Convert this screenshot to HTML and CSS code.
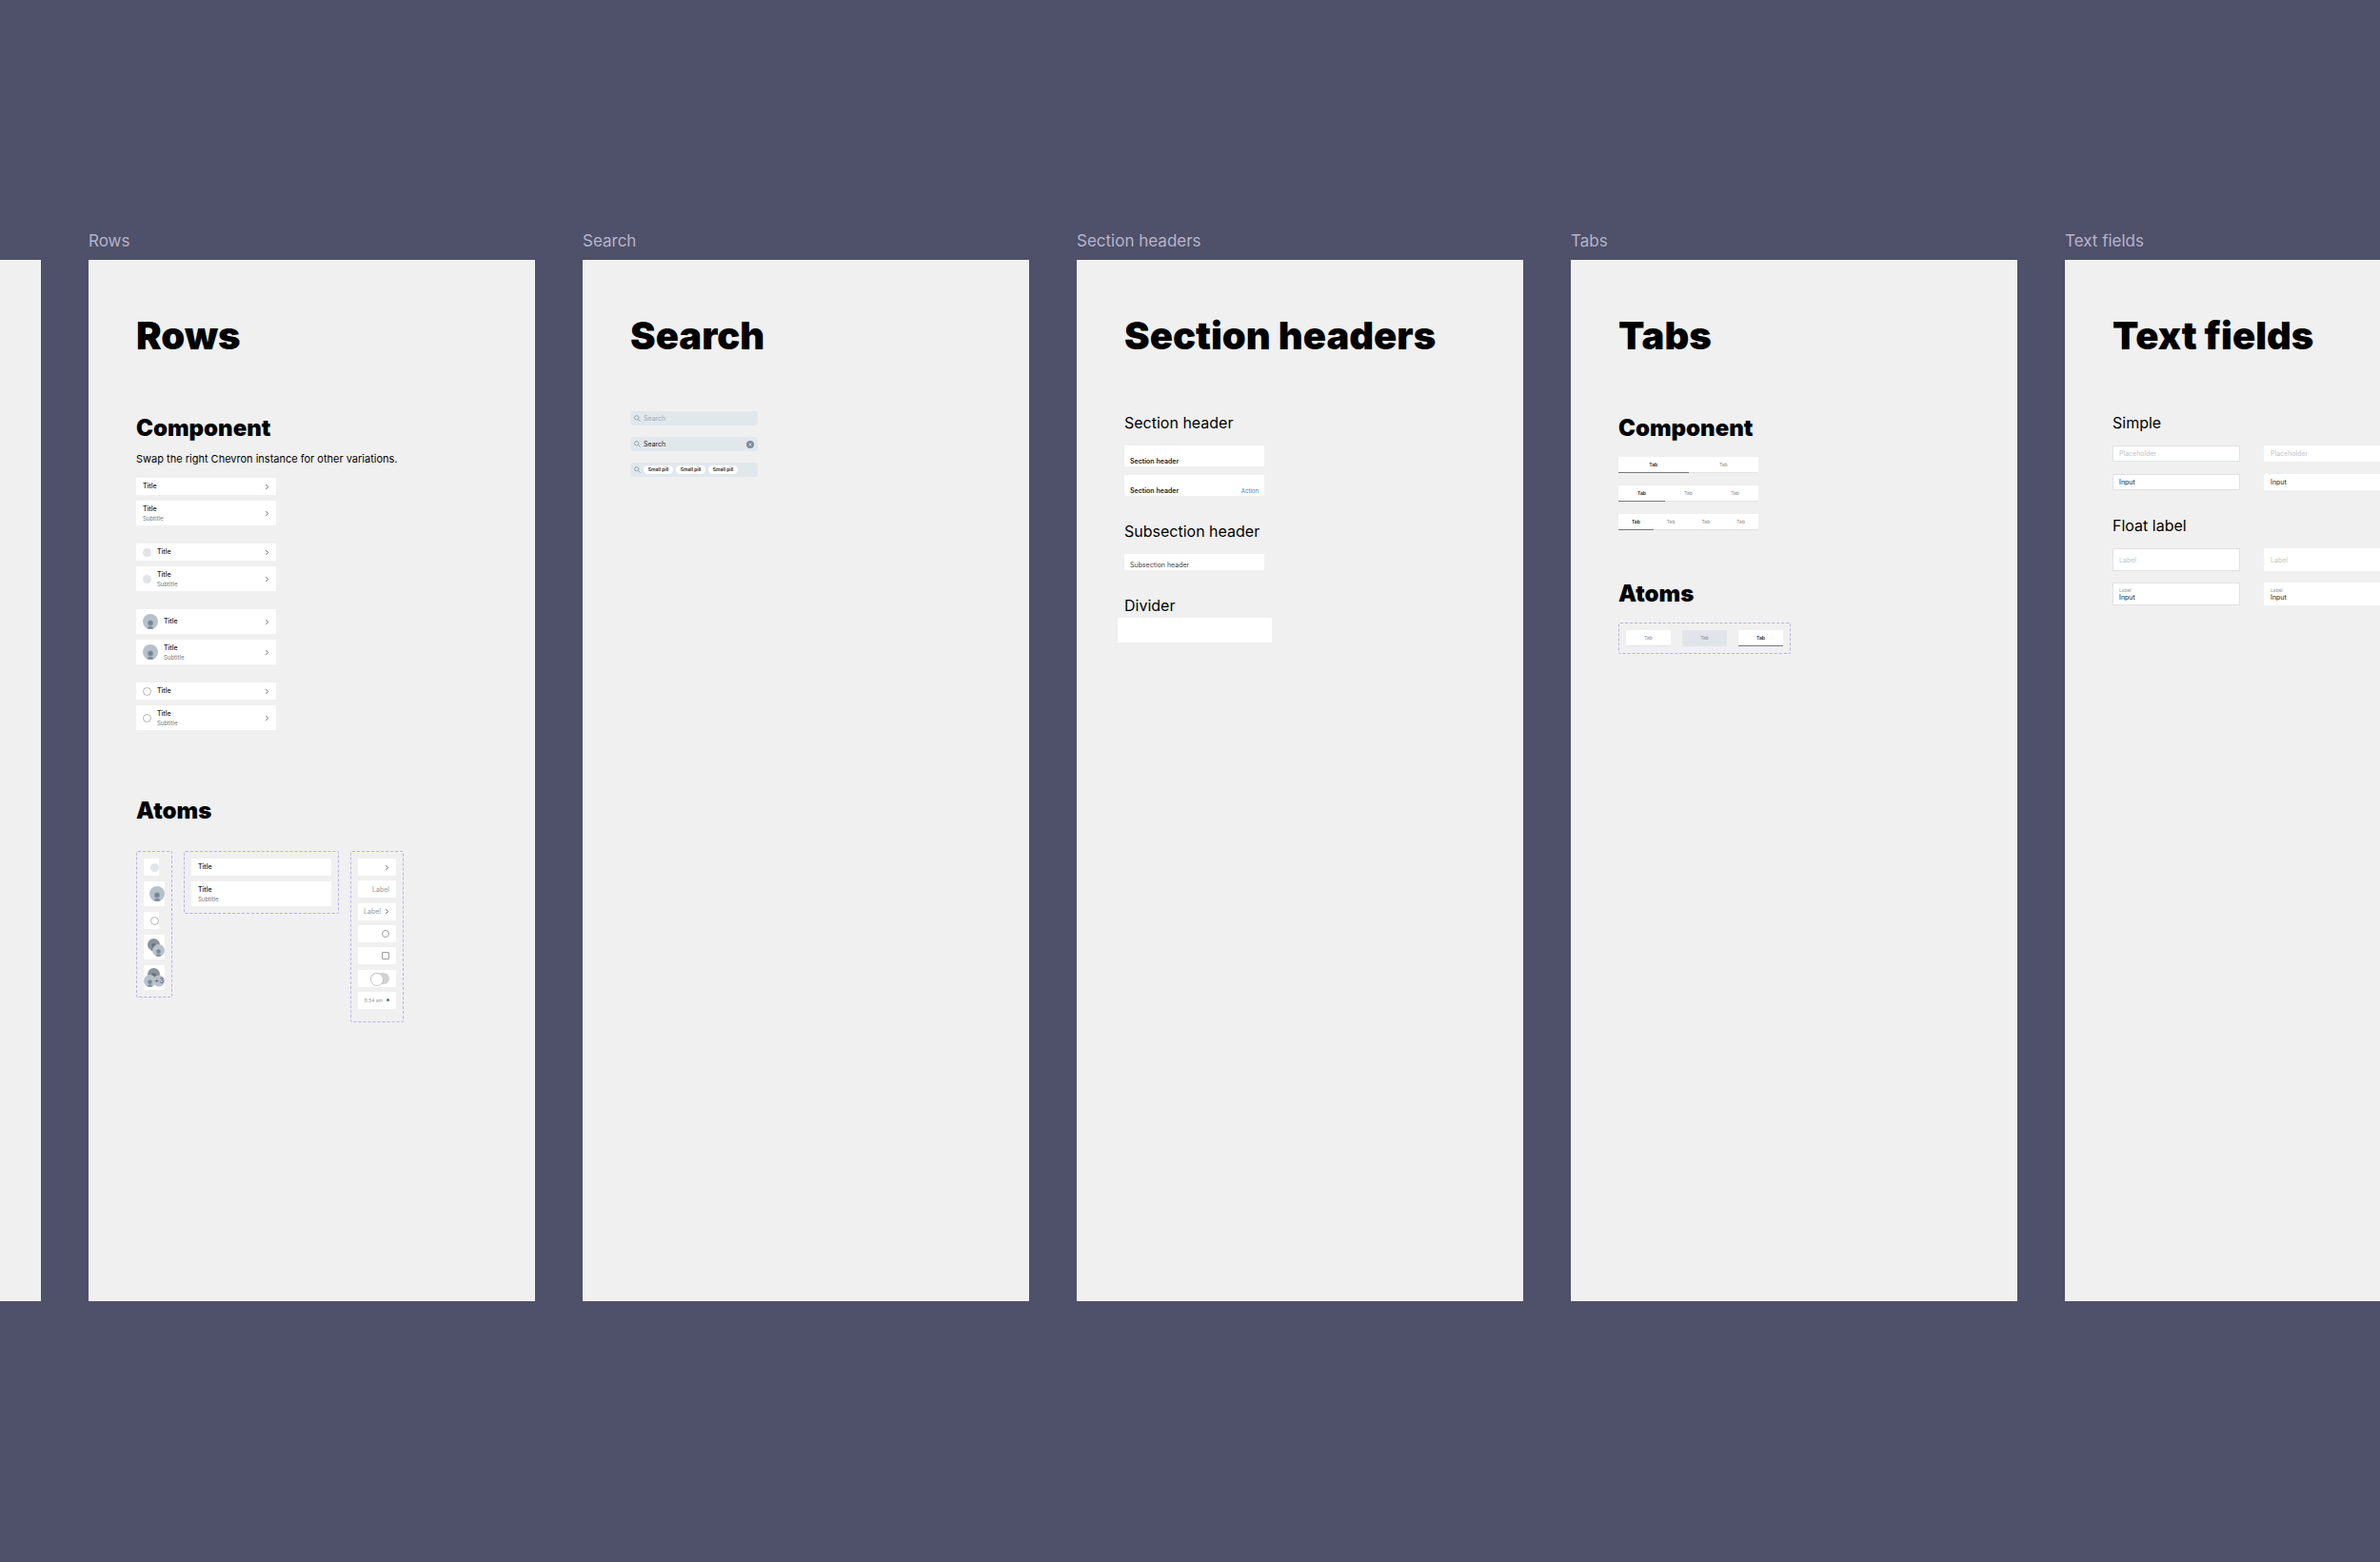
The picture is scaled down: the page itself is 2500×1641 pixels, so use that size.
FILE: index.html
```html
<!DOCTYPE html>
<html lang="en">
<head>
    <meta charset="UTF-8">
    <meta name="viewport" content="width=device-width, initial-scale=1.0">
    <title>Components</title>
    <link rel="stylesheet" href="styles.css">
</head>
<body>
    <!-- shared icons -->
    <svg class="sprite" aria-hidden="true">
        <symbol id="chevron" viewBox="0 0 4 6">
            <path d="M1 1l2 2-2 2" fill="none" stroke="#555b60" stroke-width=".8"/>
        </symbol>
        <symbol id="avatar" viewBox="0 0 16 16">
            <circle cx="8" cy="8" r="8" fill="#b7c1cb"/>
            <circle cx="8" cy="9.5" r="2.9" fill="#82909d"/>
            <circle cx="8" cy="9.3" r="1.3" fill="#6f7d8a"/>
            <path d="M4.6 15.2c.6-2 1.8-2.2 3.4-2.2s2.8.2 3.4 2.2A8 8 0 0 1 4.6 15.2z" fill="#82909d"/>
        </symbol>
        <symbol id="avatar-dark" viewBox="0 0 16 16">
            <circle cx="8" cy="8" r="8" fill="#89949c"/>
            <circle cx="8" cy="9.5" r="2.9" fill="#636e78"/>
            <path d="M4.6 15.2c.6-2 1.8-2.2 3.4-2.2s2.8.2 3.4 2.2A8 8 0 0 1 4.6 15.2z" fill="#636e78"/>
        </symbol>
        <symbol id="magnifier" viewBox="0 0 7 7">
            <circle cx="2.8" cy="2.8" r="2.2" fill="none" stroke="#7d8b96" stroke-width=".7"/>
            <path d="M4.4 4.4l2.2 2.2" stroke="#7d8b96" stroke-width=".7"/>
        </symbol>
    </svg>

    <main class="canvas">
        <section class="board">
            <div class="frame"></div>
        </section>

        <section class="board">
            <p class="board-name">Rows</p>
            <div class="frame">
                <h1>Rows</h1>
                <h2>Component</h2>
                <p class="note">Swap the right Chevron instance for other variations.</p>
                <div class="rows">
                    <div class="row-group">
                        <a class="row" href="#"><span class="text"><span class="title">Title</span></span><svg class="chevron"><use href="#chevron"/></svg></a>
                        <a class="row tall" href="#"><span class="text"><span class="title">Title</span><span class="subtitle">Subtitle</span></span><svg class="chevron"><use href="#chevron"/></svg></a>
                    </div>
                    <div class="row-group">
                        <a class="row" href="#"><span class="dot"></span><span class="text"><span class="title">Title</span></span><svg class="chevron"><use href="#chevron"/></svg></a>
                        <a class="row tall" href="#"><span class="dot"></span><span class="text"><span class="title">Title</span><span class="subtitle">Subtitle</span></span><svg class="chevron"><use href="#chevron"/></svg></a>
                    </div>
                    <div class="row-group">
                        <a class="row tall" href="#"><svg class="avatar"><use href="#avatar"/></svg><span class="text"><span class="title">Title</span></span><svg class="chevron"><use href="#chevron"/></svg></a>
                        <a class="row tall" href="#"><svg class="avatar"><use href="#avatar"/></svg><span class="text"><span class="title">Title</span><span class="subtitle">Subtitle</span></span><svg class="chevron"><use href="#chevron"/></svg></a>
                    </div>
                    <div class="row-group">
                        <label class="row"><input class="radio" type="radio" name="row"><span class="text"><span class="title">Title</span></span><svg class="chevron"><use href="#chevron"/></svg></label>
                        <label class="row tall"><input class="radio" type="radio" name="row"><span class="text"><span class="title">Title</span><span class="subtitle">Subtitle</span></span><svg class="chevron"><use href="#chevron"/></svg></label>
                    </div>
                </div>

                <h2 class="row-atoms-title">Atoms</h2>
                <div class="atoms row-atoms">
                    <div class="variants left">
                        <div class="atom"><span class="dot"></span></div>
                        <div class="atom tall wide"><svg class="avatar"><use href="#avatar"/></svg></div>
                        <div class="atom"><input class="radio" type="radio" aria-label="Select"></div>
                        <div class="atom tall wide">
                            <svg class="avatars" viewBox="0 0 22 26">
                                <use href="#avatar-dark" x="4" y="4" width="13" height="13"/>
                                <use href="#avatar" x="9" y="10" width="13" height="13"/>
                            </svg>
                        </div>
                        <div class="atom tall wide">
                            <svg class="avatars" viewBox="0 0 22 26">
                                <use href="#avatar-dark" x="4" y="3" width="13" height="13"/>
                                <circle cx="16" cy="16.5" r="6" fill="#b7c1cb"/>
                                <use href="#avatar" x="0" y="10" width="13" height="13"/>
                                <text class="more" x="11" y="19">+3</text>
                            </svg>
                        </div>
                    </div>
                    <div class="variants middle">
                        <div class="row"><span class="text"><span class="title">Title</span></span></div>
                        <div class="row tall"><span class="text"><span class="title">Title</span><span class="subtitle">Subtitle</span></span></div>
                    </div>
                    <div class="variants right">
                        <div class="atom"><svg class="chevron"><use href="#chevron"/></svg></div>
                        <div class="atom"><span class="value">Label</span></div>
                        <div class="atom"><span class="value">Label</span><svg class="chevron"><use href="#chevron"/></svg></div>
                        <div class="atom"><input class="radio small" type="radio" aria-label="Radio"></div>
                        <div class="atom"><input class="check" type="checkbox" aria-label="Checkbox"></div>
                        <div class="atom"><input class="toggle" type="checkbox" aria-label="Toggle"></div>
                        <div class="atom"><span class="time">9:54 am</span><span class="status"></span></div>
                    </div>
                </div>
            </div>
        </section>

        <section class="board">
            <p class="board-name">Search</p>
            <div class="frame">
                <h1>Search</h1>
                <div class="searches">
                    <div class="search">
                        <svg class="magnifier"><use href="#magnifier"/></svg>
                        <input type="text" placeholder="Search" aria-label="Search">
                    </div>
                    <div class="search">
                        <svg class="magnifier"><use href="#magnifier"/></svg>
                        <input type="text" value="Search" aria-label="Search">
                        <button class="clear" type="button" aria-label="Clear">
                            <svg viewBox="0 0 8 8"><circle cx="4" cy="4" r="4" fill="#7d8b96"/><path d="M2.5 2.5l3 3M5.5 2.5l-3 3" stroke="#e1e8ec" stroke-width=".8"/></svg>
                        </button>
                    </div>
                    <div class="search">
                        <svg class="magnifier"><use href="#magnifier"/></svg>
                        <button class="pill" type="button">Small pill</button>
                        <button class="pill" type="button">Small pill</button>
                        <button class="pill" type="button">Small pill</button>
                    </div>
                </div>
            </div>
        </section>

        <section class="board">
            <p class="board-name">Section headers</p>
            <div class="frame">
                <h1>Section headers</h1>
                <h3>Section header</h3>
                <div class="headers">
                    <div class="header"><strong>Section header</strong></div>
                    <div class="header"><strong>Section header</strong><a href="#">Action</a></div>
                </div>
                <h3>Subsection header</h3>
                <div class="headers">
                    <div class="header sub">Subsection header</div>
                </div>
                <h3>Divider</h3>
                <div class="divider"></div>
            </div>
        </section>

        <section class="board">
            <p class="board-name">Tabs</p>
            <div class="frame">
                <h1>Tabs</h1>
                <h2>Component</h2>
                <div class="tab-list">
                    <div class="tabs">
                        <button class="tab active" type="button">Tab</button>
                        <button class="tab" type="button">Tab</button>
                    </div>
                    <div class="tabs">
                        <button class="tab active" type="button">Tab</button>
                        <button class="tab" type="button">Tab</button>
                        <button class="tab" type="button">Tab</button>
                    </div>
                    <div class="tabs">
                        <button class="tab active" type="button">Tab</button>
                        <button class="tab" type="button">Tab</button>
                        <button class="tab" type="button">Tab</button>
                        <button class="tab" type="button">Tab</button>
                    </div>
                </div>
                <h2 class="tab-atoms-title">Atoms</h2>
                <div class="atoms">
                    <div class="variants tab-atoms">
                        <button class="tab" type="button">Tab</button>
                        <button class="tab pressed" type="button">Tab</button>
                        <button class="tab active" type="button">Tab</button>
                    </div>
                </div>
            </div>
        </section>

        <section class="board">
            <p class="board-name">Text fields</p>
            <div class="frame">
                <h1>Text fields</h1>
                <h3>Simple</h3>
                <div class="fields simple">
                    <input class="field outlined" type="text" placeholder="Placeholder" aria-label="Placeholder">
                    <input class="field" type="text" placeholder="Placeholder" aria-label="Placeholder">
                    <input class="field outlined" type="text" value="Input" aria-label="Input">
                    <input class="field" type="text" value="Input" aria-label="Input">
                </div>
                <h3>Float label</h3>
                <div class="fields float">
                    <input class="field outlined" type="text" placeholder="Label" aria-label="Label">
                    <input class="field" type="text" placeholder="Label" aria-label="Label">
                    <label class="field outlined">Label<input type="text" value="Input"></label>
                    <label class="field">Label<input type="text" value="Input"></label>
                </div>
            </div>
        </section>
    </main>
</body>
</html>
```
FILE: styles.css
```css
* {
    box-sizing: border-box;
}

body {
    margin: 0;
    background: #4f5069;
    color: #000;
    font-family: Inter, "Liberation Sans", sans-serif;
    overflow-x: hidden;
}

h1, h2, h3, p {
    margin: 0;
}

button, input {
    margin: 0;
    padding: 0;
    border: 0;
    background: none;
    color: inherit;
    font: inherit;
}

a {
    color: inherit;
    text-decoration: none;
}

svg {
    display: block;
    flex: none;
}

.sprite {
    position: absolute;
    width: 0;
    height: 0;
}

/* canvas, scrolled so that the first board is cut off on the left */
.canvas {
    display: flex;
    align-items: center;
    gap: 50px;
    min-height: 100vh;
    margin-left: -426px;
    padding-bottom: 41px;
    overflow: hidden;
}

.board {
    flex: none;
    width: 469px;
    padding-top: 40px;
}

.board-name {
    height: 30px;
    margin-top: -30px;
    color: #b4b4cb;
    font-size: 17px;
    line-height: 20px;
    white-space: nowrap;
}

.frame {
    display: flex;
    flex-direction: column;
    min-height: 1094px;
    padding: 56px 50px;
    background: #f0f0f0;
}

h1 {
    margin-bottom: 55px;
    font-size: 40px;
    font-weight: 900;
    line-height: 48px;
    white-space: nowrap;
}

h2 {
    margin-top: 4px;
    font-size: 24px;
    font-weight: 900;
    line-height: 28px;
}

h3 {
    margin-top: 27px;
    font-size: 16px;
    font-weight: 400;
    line-height: 20px;
}

h1 + h3 {
    margin-top: 2px;
}

.note {
    margin-top: 10px;
    font-size: 11px;
    line-height: 16px;
    white-space: nowrap;
}

/* rows */
.rows {
    display: flex;
    flex-direction: column;
    gap: 19px;
    width: 147px;
    margin-top: 12px;
}

.row-group {
    display: flex;
    flex-direction: column;
    gap: 6px;
}

.row {
    display: flex;
    align-items: center;
    gap: 6px;
    height: 18px;
    padding: 0 7px;
    background: #fff;
}

.row.tall, .atom.tall {
    height: 26px;
}

.text {
    display: flex;
    flex: 1;
    flex-direction: column;
}

.title {
    color: #222;
    font-size: 7px;
    font-weight: 500;
    line-height: 10px;
}

.subtitle {
    color: #777;
    font-size: 6px;
    line-height: 9px;
}

.chevron {
    width: 5px;
    height: 7px;
}

.dot {
    flex: none;
    width: 9px;
    height: 9px;
    border-radius: 50%;
    background: #e1e5ea;
}

.avatar {
    width: 16px;
    height: 16px;
}

.radio, .check {
    appearance: none;
    flex: none;
    width: 9px;
    height: 9px;
    border: 1px solid #b0b4b8;
    border-radius: 50%;
}

.radio.small, .check {
    width: 8px;
    height: 8px;
    border-color: #999da0;
}

.check {
    border-radius: 1px;
}

.toggle {
    appearance: none;
    display: flex;
    width: 20px;
    height: 12px;
    border-radius: 6px;
    background: #d2d2d2;
}

.toggle::before {
    content: "";
    width: 12px;
    height: 12px;
    border: 1px solid #c8c8c8;
    border-radius: 50%;
    background: #fff;
}

/* atoms */
.row-atoms-title {
    margin-top: 71px;
}

.row-atoms {
    margin-top: 28px;
}

.atoms {
    display: flex;
    align-items: flex-start;
    gap: 12px;
}

.variants {
    display: flex;
    flex-direction: column;
    gap: 6px;
    padding: 7px;
    border: 1px dashed #b9b0e6;
    border-radius: 2px;
}

.left {
    width: 38px;
    padding-bottom: 7px;
}

.middle {
    width: 163px;
}

.right {
    justify-content: space-between;
    gap: 0;
    width: 56px;
    height: 180px;
    padding-bottom: 13px;
}

.atom {
    display: flex;
    align-items: center;
    justify-content: flex-end;
    width: 16px;
    height: 18px;
    background: #fff;
}

.atom.wide {
    width: 22px;
}

.right .atom {
    gap: 4px;
    width: 40px;
    padding-right: 7px;
}

.avatars {
    width: 22px;
    height: 26px;
}

.more {
    fill: #5f6b76;
    font-size: 8px;
}

.value {
    color: #999;
    font-size: 7px;
}

.time {
    color: #999;
    font-size: 5px;
}

.status {
    width: 3px;
    height: 3px;
    border-radius: 50%;
    background: #3f7f63;
}

/* search */
.searches {
    display: flex;
    flex-direction: column;
    gap: 12px;
    width: 134px;
}

.search {
    display: flex;
    align-items: center;
    gap: 3px;
    height: 15px;
    padding: 0 4px;
    border-radius: 4px;
    background: #e1e8ec;
}

.magnifier {
    width: 7px;
    height: 7px;
}

.search input {
    flex: 1;
    min-width: 0;
    color: #222;
    font-size: 7px;
}

.search input::placeholder {
    color: #9fabb3;
}

.clear {
    width: 8px;
    height: 8px;
}

.pill {
    width: 31px;
    height: 9px;
    border-radius: 5px;
    background: #fff;
    color: #222;
    font-size: 5px;
    font-weight: 600;
    line-height: 9px;
    white-space: nowrap;
}

/* section headers */
.headers {
    display: flex;
    flex-direction: column;
    gap: 9px;
    width: 147px;
    margin-top: 14px;
}

.header {
    display: flex;
    align-items: flex-end;
    justify-content: space-between;
    height: 22px;
    padding: 0 6px;
    background: #fff;
    color: #222;
    font-size: 7px;
    line-height: 11px;
}

.header strong {
    font-weight: 600;
}

.header a {
    color: #3a7bd5;
    font-size: 6px;
}

.header.sub {
    height: 17px;
    color: #444;
}

.divider {
    width: 162px;
    height: 26px;
    margin: 3px 0 0 -7px;
    background: #fff;
}

/* tabs */
.tab-list {
    display: flex;
    flex-direction: column;
    gap: 13px;
    width: 147px;
    margin-top: 16px;
}

.tabs {
    display: flex;
}

.tab {
    flex: 1;
    height: 17px;
    border-bottom: 1px solid #e4e4e4;
    background: #fff;
    color: #888;
    font-size: 5px;
    line-height: 16px;
}

.tab.active {
    border-color: #777;
    color: #222;
    font-weight: 600;
}

.tab.pressed {
    border-color: #e1e5ea;
    background: #e1e5ea;
}

.tab-atoms-title {
    margin-top: 53px;
}

.tab-atoms-title + .atoms {
    margin-top: 16px;
}

.tab-atoms {
    flex-direction: row;
    gap: 12px;
    width: 181px;
}

/* text fields */
.fields {
    display: grid;
    grid-template-columns: 134px 134px;
    gap: 13px 25px;
    margin-top: 14px;
}

.field {
    width: 100%;
    height: 17px;
    padding: 0 6px;
    border: 1px solid #fff;
    background: #fff;
    color: #222;
    font-size: 7px;
}

.field.outlined {
    border-color: #dfe1e3;
}

.field::placeholder {
    color: #bfc4c8;
}

.float {
    gap: 12px 25px;
}

.float .field {
    height: 24px;
}

label.field {
    display: flex;
    flex-direction: column;
    justify-content: center;
    color: #999;
    font-size: 5px;
    line-height: 6px;
}

label.field input {
    height: 9px;
    color: #222;
    font-size: 7px;
    line-height: 9px;
}
```
